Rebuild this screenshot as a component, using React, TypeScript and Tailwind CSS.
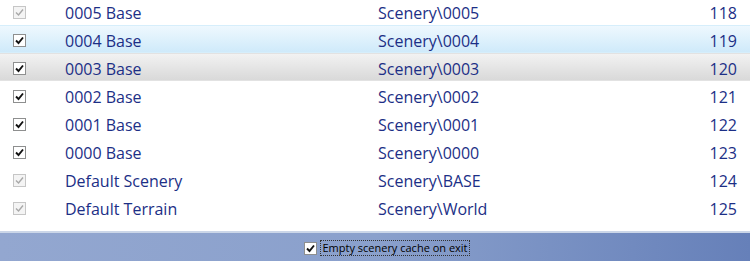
type Row = {
  name: string;
  path: string;
  num: number;
  disabled?: boolean;
  state?: "hover" | "selected";
};

const rows: Row[] = [
  { name: "0005 Base", path: "Scenery\\0005", num: 118, disabled: true },
  { name: "0004 Base", path: "Scenery\\0004", num: 119, state: "hover" },
  { name: "0003 Base", path: "Scenery\\0003", num: 120, state: "selected" },
  { name: "0002 Base", path: "Scenery\\0002", num: 121 },
  { name: "0001 Base", path: "Scenery\\0001", num: 122 },
  { name: "0000 Base", path: "Scenery\\0000", num: 123 },
  { name: "Default Scenery", path: "Scenery\\BASE", num: 124, disabled: true },
  { name: "Default Terrain", path: "Scenery\\World", num: 125, disabled: true },
];

function Check({ disabled, size = 13 }: { disabled?: boolean; size?: number }) {
  return (
    <div
      className={`flex items-center justify-center border ${
        disabled ? "border-[#c6c6c6] bg-[#f4f4f4]" : "border-[#8e8f8f] bg-white"
      }`}
      style={{ width: size, height: size }}
    >
      <svg width={size - 4} height={size - 4} viewBox="0 0 9 9">
        <path
          d="M1 4.5 L3.5 7 L8 1.5"
          fill="none"
          stroke={disabled ? "#a8a8a8" : "#111"}
          strokeWidth={disabled ? 1.4 : 1.9}
        />
      </svg>
    </div>
  );
}

export default function App() {
  return (
    <div className="w-[750px] h-[261px] overflow-hidden bg-white flex flex-col font-['Segoe_UI','Open_Sans',sans-serif]">
      {/* list */}
      <div className="flex flex-col mt-[-3px]">
        {rows.map((r) => (
          <div
            key={r.name}
            className={`h-[28px] flex items-center text-[16px] text-[#1c2f86] ${
              r.state === "hover"
                ? "bg-gradient-to-b from-[#eef8fe] to-[#cfeafa] border-y border-[#d6eefb]"
                : r.state === "selected"
                ? "bg-gradient-to-b from-[#f2f2f2] to-[#d9d9d9] border-y border-[#e2e2e2]"
                : ""
            }`}
          >
            <div className="w-[65px] pl-[13px] pt-[2px]">
              <Check disabled={r.disabled} />
            </div>
            <div className="w-[313px] pt-[4px]">{r.name}</div>
            <div className="flex-1 pt-[4px]">{r.path}</div>
            <div className="pr-[13px] pt-[4px]">{r.num}</div>
          </div>
        ))}
      </div>

      {/* footer */}
      <div className="mt-auto h-[30px] border-t-2 border-[#cbd6e8] bg-gradient-to-r from-[#93a7d0] via-[#8aa0cc] to-[#6680b9] flex items-center justify-center pl-[24px] pt-[2px]">
        <div className="flex items-center gap-[3px]">
          <Check size={13} />
          <span className="text-[11px] text-black leading-[14px] px-[1px] border border-dotted border-[#333]">
            Empty scenery cache on exit
          </span>
        </div>
      </div>
    </div>
  );
}
